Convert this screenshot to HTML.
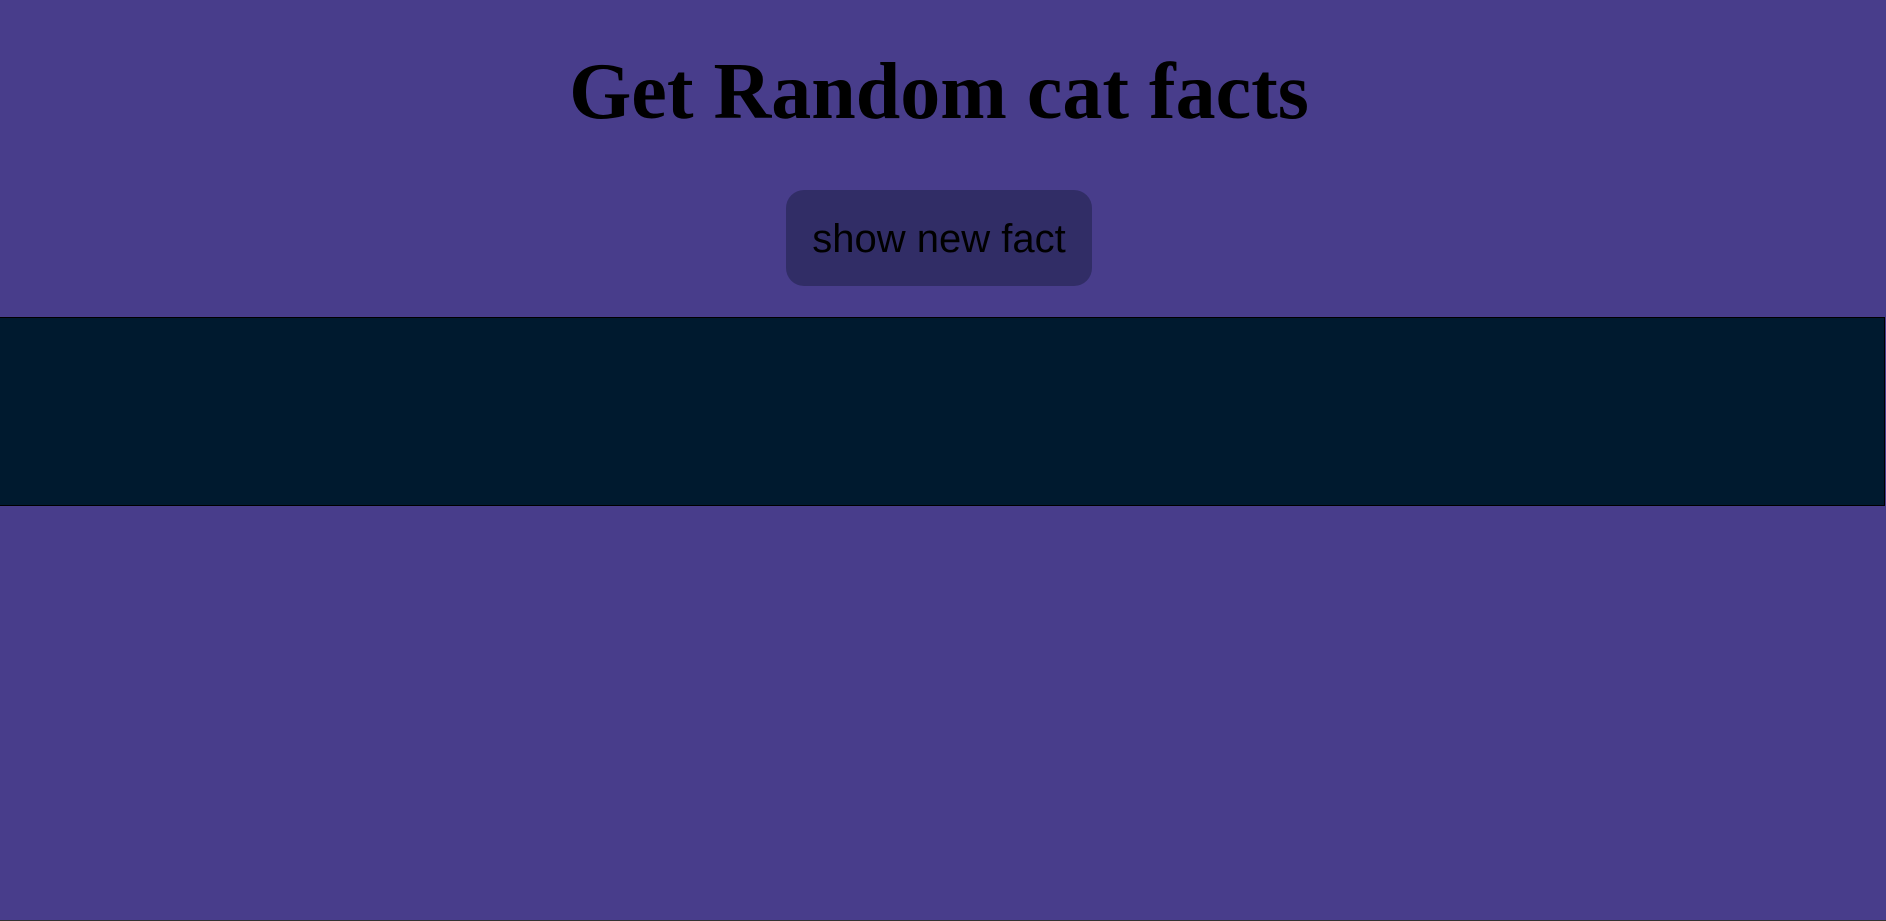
<!DOCTYPE html>
<html><head><style>
html,body{margin:0;padding:0;width:1886px;height:921px;overflow:hidden;background:#483d8b;}
h1{position:absolute;left:-4px;width:1886px;top:44px;margin:0;text-align:center;font-family:"Liberation Serif",serif;font-weight:bold;font-size:80px;line-height:96px;color:#000;}
.btn{position:absolute;left:786px;top:190px;width:306px;height:96px;border-radius:18px;background:#312d66;font-family:"Liberation Sans",sans-serif;font-size:40px;color:#000;text-align:center;line-height:98px;}
.band{position:absolute;left:0;top:317px;width:1884px;height:187px;background:#001a2f;border:1px solid #000;border-left:none;}
.bot{position:absolute;left:0;top:920px;width:1886px;height:1px;background:#333;}
</style></head><body>
<h1>Get Random cat facts</h1>
<div class="btn">show new fact</div>
<div class="band"></div>
<div class="bot"></div>
</body></html>
